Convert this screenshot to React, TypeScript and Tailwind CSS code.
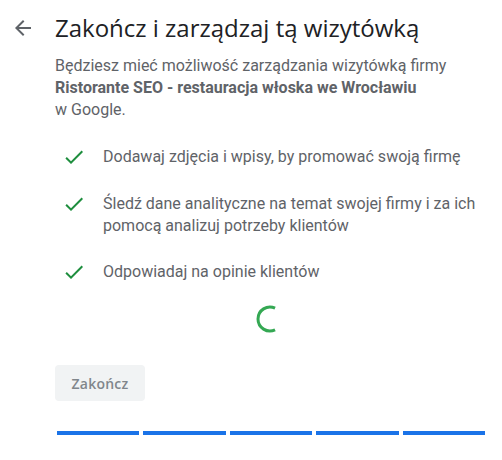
import React from "react";

const Check = () => (
  <svg width="24" height="24" viewBox="0 0 24 24" className="shrink-0">
    <path fill="#1e8e3e" d="M9 16.17L4.83 12l-1.42 1.41L9 19 21 7l-1.41-1.41L9 16.17z" />
  </svg>
);

const items = [
  "Dodawaj zdjęcia i wpisy, by promować swoją firmę",
  "Śledź dane analityczne na temat swojej firmy i za ich pomocą analizuj potrzeby klientów",
  "Odpowiadaj na opinie klientów",
];

export default function App() {
  return (
    <div className="w-[502px] h-[460px] bg-white relative overflow-hidden" style={{ fontFamily: "Roboto, 'Liberation Sans', sans-serif" }}>
      <div className="flex items-center pt-[12px]">
        <div className="w-[55px] flex justify-start pl-[11px]">
          <svg width="24" height="24" viewBox="0 0 24 24">
            <path fill="#5f6368" d="M20 11H7.83l5.59-5.59L12 4l-8 8 8 8 1.41-1.41L7.83 13H20v-2z" />
          </svg>
        </div>
        <h1 className="text-[24px] leading-[32px] text-[#202124]" style={{ fontFamily: "'Open Sans', sans-serif" }}>
          Zakończ i zarządzaj tą wizytówką
        </h1>
      </div>
      <div className="pl-[55px] pr-[20px]">
        <p className="mt-[11px] text-[16px] leading-[22px] text-[#5f6368]">
          Będziesz mieć możliwość zarządzania wizytówką firmy
          <br />
          <b className="font-bold">Ristorante SEO - restauracja włoska we Wrocławiu</b>
          <br />
          w Google.
        </p>
        <ul className="mt-[25px] flex flex-col gap-[24px] pl-[7px]">
          {items.map((t) => (
            <li key={t} className="flex items-start gap-[17px]">
              <div className="mt-[-1px]">
                <Check />
              </div>
              <span className="text-[16px] leading-[22px] text-[#5f6368] w-[380px]">{t}</span>
            </li>
          ))}
        </ul>
        <div className="flex mt-[21px] pl-[201px]">
          <svg width="28" height="28" viewBox="0 0 28 28">
            <path
              d="M19.07 3.12 A12 12 0 1 0 19.07 24.88"
              fill="none"
              stroke="#34a853"
              strokeWidth="3"
            />
          </svg>
        </div>
        <button
          className="mt-[32px] w-[90px] h-[36px] rounded-[4px] bg-[#f1f3f4] text-[#80868b] text-[14px] font-semibold tracking-[0.25px]"
          style={{ fontFamily: "'Open Sans', sans-serif" }}
        >
          Zakończ
        </button>
        <div className="mt-[30px] ml-[2px] w-[428px] flex gap-[4px]">
          {[0, 1, 2, 3, 4].map((i) => (
            <div key={i} className="flex-1 h-[4px] bg-[#1a73e8]" />
          ))}
        </div>
      </div>
    </div>
  );
}
